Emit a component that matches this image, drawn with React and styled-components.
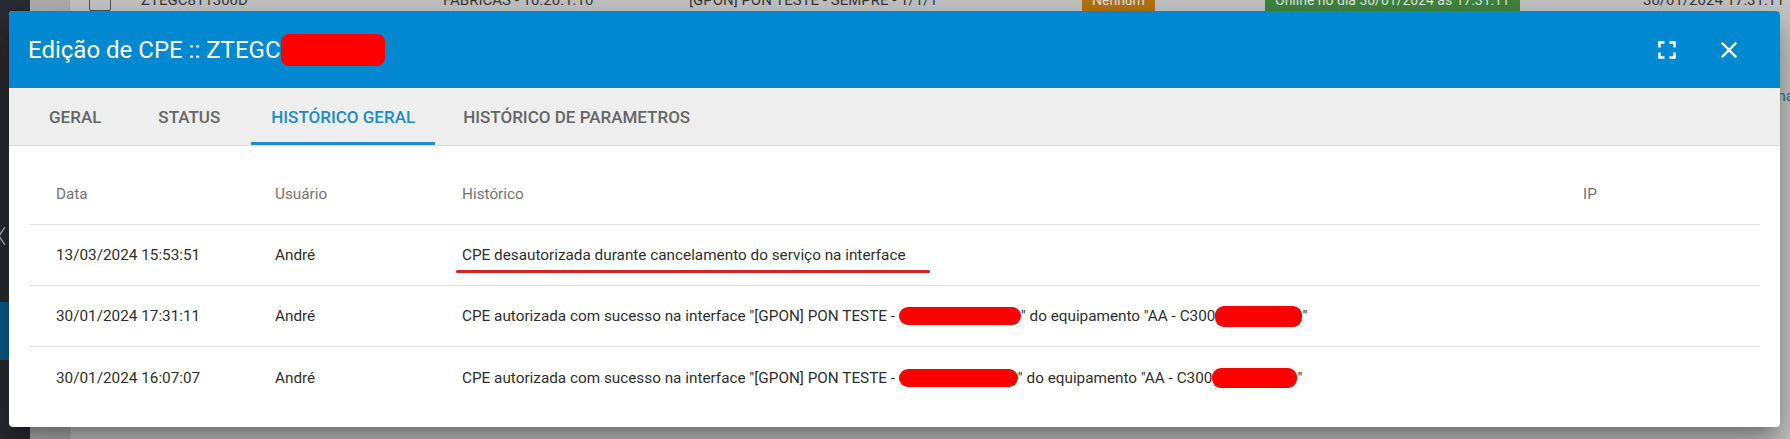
import React from "react";
import styled, { createGlobalStyle } from "styled-components";
import { MdFullscreen, MdClose } from "react-icons/md";

const GlobalStyle = createGlobalStyle`
  html, body {
    margin: 0;
    padding: 0;
  }
  body {
    font-family: Roboto, "Liberation Sans", sans-serif;
    background: #c9c9c9;
    overflow: hidden;
  }
`;

// ml = space before each tab
const tabs = [
  { label: "GERAL", ml: 0 },
  { label: "STATUS", ml: 17 },
  { label: "HISTÓRICO GERAL", ml: 11 },
  { label: "HISTÓRICO DE PARAMETROS", ml: 8 },
];

const columns = ["Data", "Usuário", "Histórico", "IP"];

const App = () => {
  return (
    <Screen>
      <GlobalStyle />
      <Backdrop>
        <SideNav>
          <NavChevron viewBox="0 0 8 20">
            <polyline points="7,1 1,10 7,19" />
          </NavChevron>
          <NavActive />
        </SideNav>
        <Gutter />
        <Listing>
          <ListRow>
            <Check />
            <ListCell $w={302}>ZTEGC811300D</ListCell>
            <ListCell $w={246}>FABRICAS - 10.20.1.10</ListCell>
            <ListCell $w={393}>[GPON] PON TESTE - SEMPRE - 1/1/1</ListCell>
            <ListCell $w={183}>
              <Badge $bg="#b87611">Nenhum</Badge>
            </ListCell>
            <ListCell $w={378}>
              <Badge $bg="#3f8a3f">Online no dia 30/01/2024 às 17:31:11</Badge>
            </ListCell>
            <ListCell>30/01/2024 17:31:11</ListCell>
          </ListRow>
          <PagerLink>Página</PagerLink>
        </Listing>
      </Backdrop>

      <Dialog>
        <DialogHeader>
          <Title>
            Edição de CPE :: ZTEGC<Redact $w={104} $h={32} $r={8} />
          </Title>
          <HeaderActions>
            <IconButton aria-label="Tela cheia">
              <MdFullscreen size={30} />
            </IconButton>
            <IconButton aria-label="Fechar">
              <MdClose size={28} />
            </IconButton>
          </HeaderActions>
        </DialogHeader>

        <TabBar>
          {tabs.map((t, i) => (
            <Tab key={t.label} $active={i === 2} $ml={t.ml}>
              {t.label}
            </Tab>
          ))}
        </TabBar>

        <DialogBody>
          <Table>
            <HeadRow>
              {columns.map((c) => (
                <HeadCell key={c}>{c}</HeadCell>
              ))}
            </HeadRow>

            <Row>
              <Cell>13/03/2024 15:53:51</Cell>
              <Cell>André</Cell>
              <Cell>
                CPE desautorizada durante cancelamento do serviço na interface
                <Scribble />
              </Cell>
              <Cell />
            </Row>

            <Row>
              <Cell>30/01/2024 17:31:11</Cell>
              <Cell>André</Cell>
              <Cell>
                CPE autorizada com sucesso na interface "[GPON] PON TESTE -{" "}
                <Redact $w={122} $h={18} $r={9} />" do equipamento
                "AA - C300
                <Redact $w={87} $h={21} $r={9} />"
              </Cell>
              <Cell />
            </Row>

            <Row $last>
              <Cell>30/01/2024 16:07:07</Cell>
              <Cell>André</Cell>
              <Cell>
                CPE autorizada com sucesso na interface "[GPON] PON TESTE -{" "}
                <Redact $w={119} $h={18} $r={9} />" do equipamento
                "AA - C300
                <Redact $w={85} $h={20} $r={9} />"
              </Cell>
              <Cell />
            </Row>
          </Table>
        </DialogBody>
      </Dialog>
    </Screen>
  );
};

export default App;

/* ---- page behind the modal ---- */

const Screen = styled.div`
  position: relative;
  width: 100vw;
  height: 439px;
  overflow: hidden;
`;

const Backdrop = styled.div`
  display: flex;
  height: 100%;
`;

const SideNav = styled.div`
  width: 30px;
  flex-shrink: 0;
  background: #2a2c31;
  display: flex;
  flex-direction: column;
`;

const NavChevron = styled.svg`
  width: 8px;
  height: 20px;
  margin-top: 226px;
  margin-left: -2px;
  fill: none;
  stroke: #b8bcc2;
  stroke-width: 1.3;
`;

const NavActive = styled.div`
  height: 58px;
  margin-top: 56px;
  background: #0b5d8f;
`;

const Gutter = styled.div`
  width: 39px;
  flex-shrink: 0;
  background: #b4b4b4;
  border-right: 1px solid #a9a9a9;
`;

const Listing = styled.div`
  flex: 1;
  background: #c9c9c9;
  display: flex;
  flex-direction: column;
`;

const ListRow = styled.div`
  display: flex;
  align-items: center;
  height: 30px;
  margin-top: -15px;
  padding-left: 19px;
  font-size: 15px;
  color: #3a3a3a;
`;

const Check = styled.div`
  width: 20px;
  height: 20px;
  border: 1.5px solid #555;
  border-radius: 2px;
  margin-right: 30px;
  flex-shrink: 0;
`;

const ListCell = styled.div`
  width: ${(p) => (p.$w ? `${p.$w}px` : "auto")};
  flex-shrink: 0;
  white-space: nowrap;
`;

const Badge = styled.span`
  display: inline-block;
  background: ${(p) => p.$bg};
  color: #e9e9e9;
  padding: 5px 10px;
  font-size: 14px;
`;

const PagerLink = styled.div`
  align-self: flex-end;
  margin-top: 72px;
  margin-right: -4px;
  font-size: 15px;
  color: #2f6f9a;
`;

/* ---- modal ---- */

const Dialog = styled.div`
  position: absolute;
  top: 11px;
  left: 9px;
  width: 1771px;
  height: 416px;
  background: #fff;
  border-radius: 4px;
  overflow: hidden;
  display: flex;
  flex-direction: column;
  box-shadow: 0 11px 15px -7px rgba(0, 0, 0, 0.25),
    0 24px 38px 3px rgba(0, 0, 0, 0.18), 0 9px 46px 8px rgba(0, 0, 0, 0.15);
`;

const DialogHeader = styled.div`
  height: 77px;
  flex-shrink: 0;
  background: #0288d1;
  display: flex;
  align-items: center;
  justify-content: space-between;
  padding: 0 37px 0 19px;
`;

const Title = styled.h2`
  margin: 0;
  display: flex;
  align-items: center;
  font-size: 24px;
  font-weight: 400;
  color: #fff;
  white-space: nowrap;
`;

const HeaderActions = styled.div`
  display: flex;
  align-items: center;
  gap: 33px;
`;

const IconButton = styled.button`
  display: flex;
  align-items: center;
  justify-content: center;
  padding: 0;
  border: 0;
  background: transparent;
  color: #fff;
  cursor: pointer;
`;

const Redact = styled.span`
  display: inline-block;
  width: ${(p) => p.$w}px;
  height: ${(p) => p.$h}px;
  border-radius: ${(p) => p.$r}px;
  margin-left: ${(p) => p.$ml || 0}px;
  background: #ff0000;
  vertical-align: middle;
`;

const TabBar = styled.div`
  height: 57px;
  flex-shrink: 0;
  display: flex;
  padding-left: 20px;
  background: #eeeeee;
  border-bottom: 1px solid #dcdcdc;
`;

const Tab = styled.div`
  margin-left: ${(p) => p.$ml}px;
  padding: 3px 20px 0;
  display: flex;
  align-items: center;
  font-size: 17px;
  font-weight: 500;
  color: ${(p) => (p.$active ? "#1b8ccc" : "#666666")};
  border-bottom: 3px solid ${(p) => (p.$active ? "#1b8ccc" : "transparent")};
  white-space: nowrap;
  cursor: pointer;
`;

const DialogBody = styled.div`
  flex: 1;
  padding: 17px 20px 18px 20px;
`;

const Table = styled.div`
  display: grid;
  grid-template-columns: 219px 187px 1fr 204px;
`;

const HeadRow = styled.div`
  display: contents;
`;

const HeadCell = styled.div`
  height: 61px;
  display: flex;
  align-items: center;
  padding-left: 27px;
  font-size: 15.3px;
  color: #757575;
  border-bottom: 1px solid #e3e3e3;
`;

const Row = styled.div`
  display: contents;

  & > div {
    border-bottom: ${(p) => (p.$last ? "none" : "1px solid #e3e3e3")};
    height: ${(p) => (p.$last ? "61px" : "60px")};
  }
`;

const Cell = styled.div`
  position: relative;
  display: flex;
  align-items: center;
  padding-left: 27px;
  font-size: 15.3px;
  color: #2f2f2f;
  white-space: pre;
`;

const Scribble = styled.span`
  position: absolute;
  left: 21px;
  top: 45px;
  width: 474px;
  height: 3px;
  border-radius: 2px;
  background: #d42323;
`;
